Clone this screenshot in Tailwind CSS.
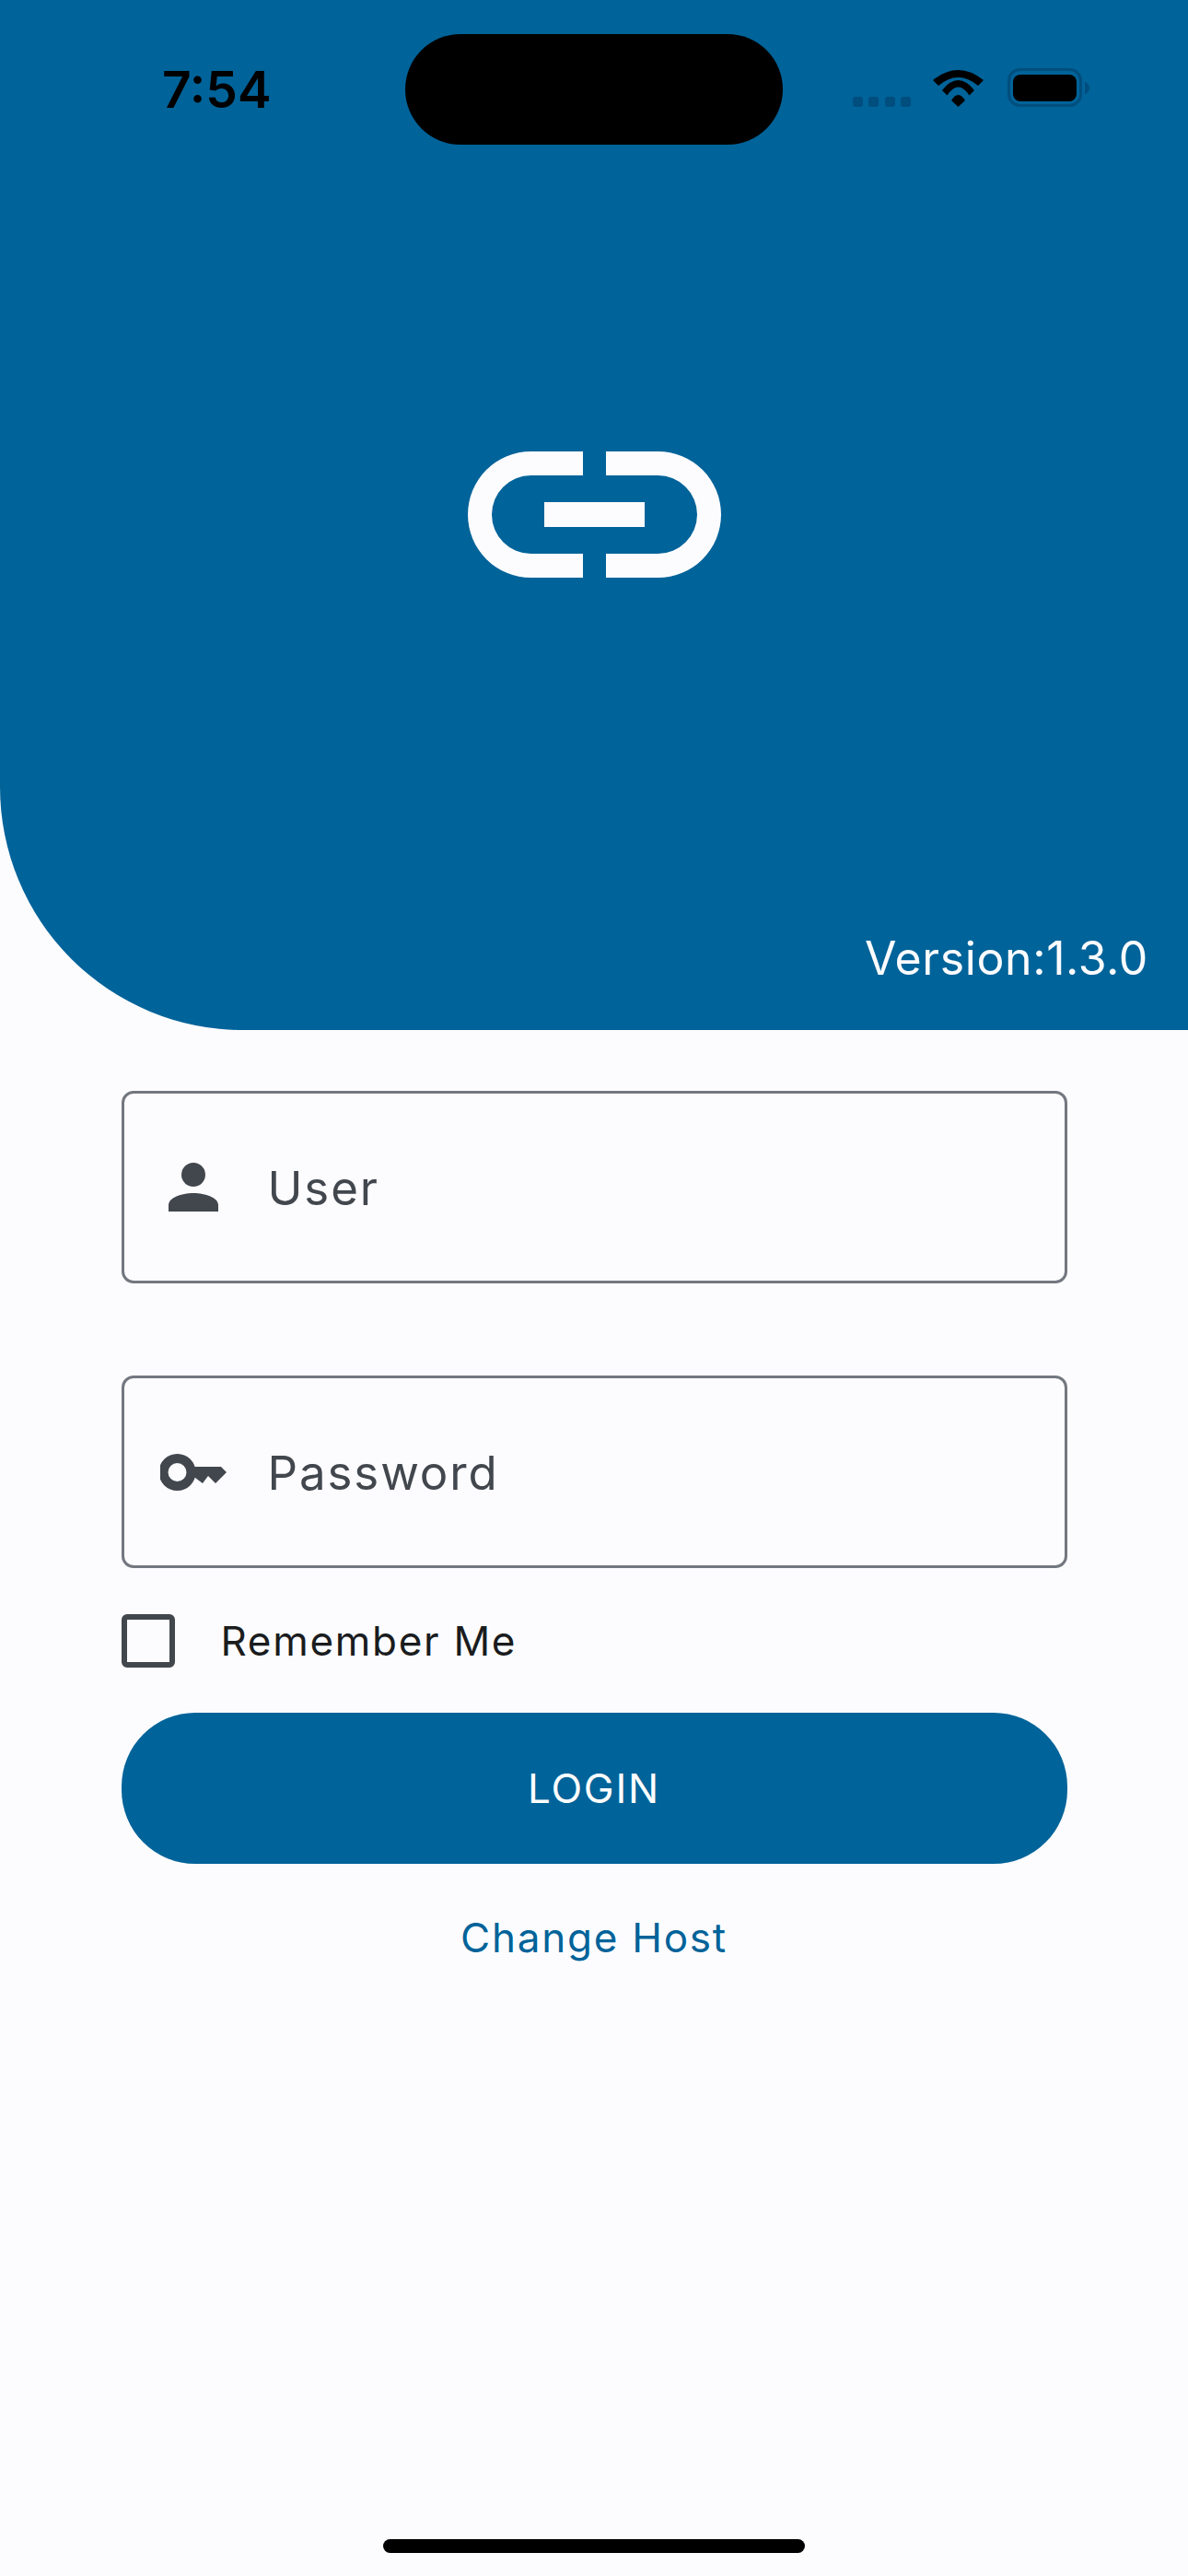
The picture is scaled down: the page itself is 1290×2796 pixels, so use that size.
<!DOCTYPE html>
<html lang="en">
<head>
    <meta charset="UTF-8">
    <meta name="viewport" content="width=device-width, initial-scale=1.0">
    <title>Login</title>
    <script src="https://cdn.jsdelivr.net/npm/@tailwindcss/browser@4"></script>
</head>
<body class="bg-[#fcfcff] font-['Inter',sans-serif]">
    <div class="h-[2796px] flex flex-col overflow-hidden">
        <!-- Header -->
        <header class="h-[1118px] bg-[#006399] rounded-bl-[264px] flex flex-col">
            <!-- Status bar -->
            <div class="mt-[37px] h-[120px] grid grid-cols-[440px_410px_1fr]">
                <div class="pl-[176px] flex items-center text-[55px] leading-[60px] font-semibold text-black">7:54</div>
                <div class="bg-black rounded-[60px]"></div>
                <div class="pl-[76px] pb-[41px] flex items-end">
                    <div class="flex gap-[6.3px]">
                        <span class="w-[11px] h-[11px] rounded-[3px] bg-[#004e7e]"></span>
                        <span class="w-[11px] h-[11px] rounded-[3px] bg-[#004e7e]"></span>
                        <span class="w-[11px] h-[11px] rounded-[3px] bg-[#004e7e]"></span>
                        <span class="w-[11px] h-[11px] rounded-[3px] bg-[#004e7e]"></span>
                    </div>
                    <svg class="ml-[24px]" width="55" height="40" viewBox="0 0 55 40" fill="#000">
                        <path d="M0 11Q27.5-11 55 11L49 17Q27.500-1 6 17Z"/>
                        <path d="M10 22Q27.500 0 45 22L39.500 27.500Q27.500 9.500 15.500 27.500Z"/>
                        <path d="M20 33Q27.500 21 35 33L27.500 40Z"/>
                    </svg>
                    <svg class="ml-[26px]" width="89" height="42" viewBox="0 0 89 42">
                        <rect x="1.500" y="1.500" width="78" height="39" rx="12" fill="none" stroke="#004e7e" stroke-width="3"/>
                        <rect x="6" y="7" width="69" height="29" rx="8" fill="#000"/>
                        <path d="M84 15C87 16 89 18 89 21.500C89 25 87 27 84 28Z" fill="#004e7e"/>
                    </svg>
                </div>
            </div>

            <!-- Logo -->
            <div class="mt-[333px] pl-px flex justify-center">
                <svg width="275" height="137" viewBox="0 0 275 137" fill="#fcfcff">
                    <path d="M125 0H68.500A68.500 68.500 0 0 0 68.500 137H125V111H68.500A42.500 42.500 0 0 1 68.500 26H125Z"/>
                    <path d="M150 0H206.500A68.500 68.500 0 0 1 206.500 137H150V111H206.500A42.500 42.500 0 0 0 206.500 26H150Z"/>
                    <rect x="83" y="55" width="109" height="27"/>
                </svg>
            </div>

            <div class="mt-auto pr-[43px] pb-[48px] text-right text-[50px] leading-[60px] text-[#fcfcff] tracking-[0.6px]">Version:1.3.0</div>
        </header>

        <!-- Form -->
        <main class="px-[131.5px] pt-[66px]">
            <div class="h-[209px] border-[3px] border-[#73777f] rounded-[13px] flex items-center">
                <svg class="ml-[48px]" width="54" height="53" viewBox="0 0 54 53" fill="#42474e">
                    <circle cx="27" cy="13" r="13"/>
                    <path d="M0 53V46C0 38 14 33 27 33C40 33 54 38 54 46V53Z"/>
                </svg>
                <span class="ml-[54px] pt-[2px] text-[51px] leading-[60px] tracking-[1.9px] text-[#42474e]">User</span>
            </div>

            <div class="mt-[100px] h-[209px] border-[3px] border-[#73777f] rounded-[13px] flex items-center">
                <svg class="ml-[39px]" width="72" height="40" viewBox="0 0 72 40" fill="#42474e" fill-rule="evenodd">
                    <path d="M18.500 0A20 20 0 1 1 18.500 40A20 20 0 1 1 18.500 0ZM18.500 10A10 10 0 1 0 18.500 30A10 10 0 1 0 18.500 10Z"/>
                    <path d="M34 14H66L72 20L60 32L52 24L46 32L38 26H34Z"/>
                </svg>
                <span class="ml-[45px] pt-[2px] text-[51px] leading-[60px] tracking-[1.9px] text-[#42474e]">Password</span>
            </div>

            <label class="mt-[50px] flex items-center">
                <span class="w-[58px] h-[58px] border-[6px] border-[#42474e] rounded-[6px]"></span>
                <span class="ml-[50px] text-[44px] leading-[58px] tracking-[1.7px] text-[#1a1c1e]">Remember Me</span>
            </label>

            <button class="mt-[49px] w-full h-[164px] rounded-[80px] bg-[#006399] text-[44px] tracking-[1.8px] text-white">LOGIN</button>

            <div class="mt-[50px] text-center text-[44px] leading-[60px] tracking-[1.75px] text-[#006399]">Change Host</div>
        </main>

        <!-- Home indicator -->
        <div class="mt-auto mb-[25px] mx-auto w-[458px] h-[15px] rounded-full bg-black"></div>
    </div>
</body>
</html>
